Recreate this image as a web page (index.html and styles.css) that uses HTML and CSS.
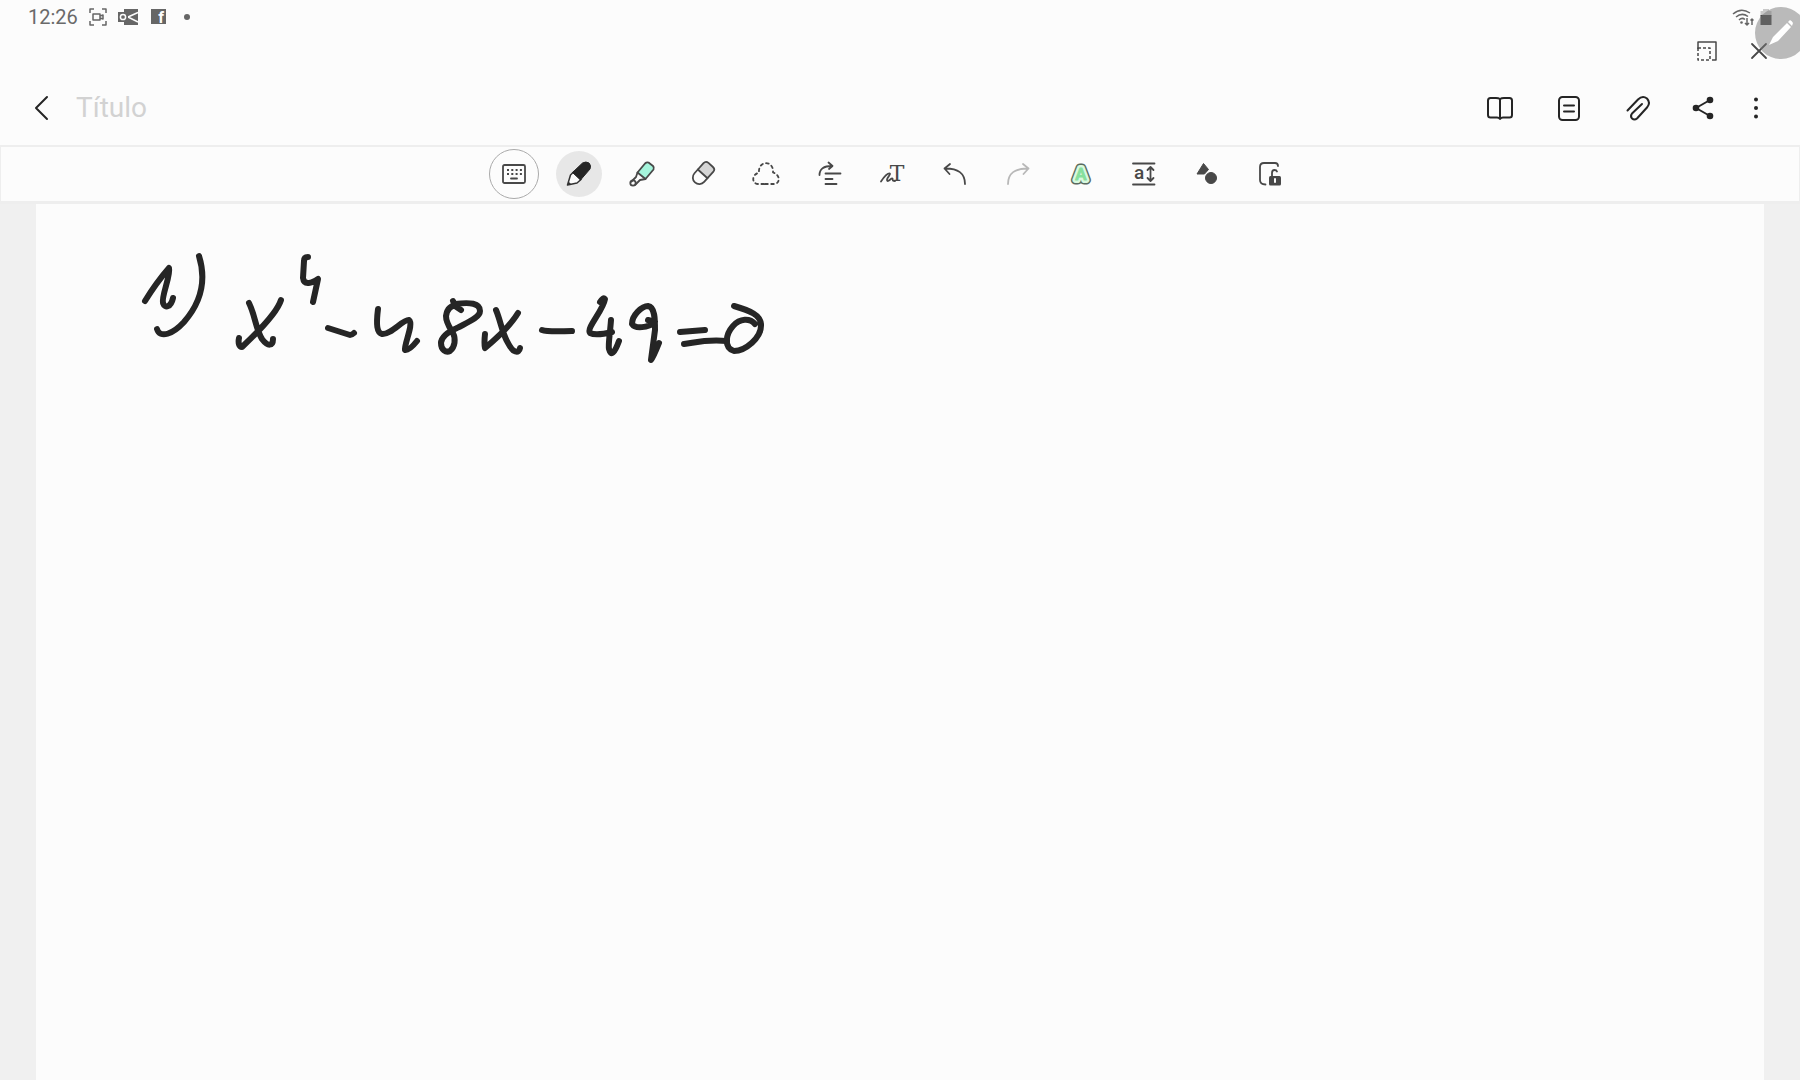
FILE: index.html
```html
<!DOCTYPE html>
<html lang="es">
<head>
<meta charset="utf-8">
<title>Notas</title>
<link rel="stylesheet" href="styles.css">
</head>
<body>
<div class="status">
  <span class="time">12:26</span>
  <svg class="status-icon" viewBox="0 0 20 20"><path class="s2" d="M2 6V2H6M14 2H18V6M18 14V18H14M6 18H2V14"/><path class="s2" d="M5 7H12V13H5ZM12 9L15 8V12L12 11"/></svg>
  <svg class="status-icon" viewBox="0 0 20 20"><path class="solid" d="M6 2H20V18H6Z"/><path d="M10 10L20 5.500M10 10L20 15" stroke="#fcfcfc" stroke-width="1.500"/><path class="solid" d="M0 5H10V15H0Z"/><circle cx="5" cy="10" r="2.600" fill="none" stroke="#fcfcfc" stroke-width="1.500"/></svg>
  <svg class="status-icon" viewBox="0 0 20 20"><path class="solid" d="M3 2H18V17H3Z"/><text x="13" y="16" class="face">f</text></svg>
  <span class="dot"></span>
  <span class="spacer"></span>
  <svg class="wifi" viewBox="0 0 22 20"><g class="s2"><path d="M1 7Q9 0 18 6M4 10Q10 5 16 9.500M7 13Q10 10 13 12.500"/><path d="M15 11V18M13 16L15 18L17 16M20 18V12M18.500 13.500L20 12L21.500 13.500"/></g><circle class="solid" cx="9.500" cy="15.500" r="1.300"/></svg>
  <svg class="battery" viewBox="0 0 12 18"><path fill="#c9c9c9" d="M3 1H9V3H11.500V8H.500V3H3Z"/><path fill="#484848" d="M.500 7H11.500V17H.500Z"/></svg>
</div>
<div class="window-row">
  <button class="win" aria-label="Cambiar tamaño"><svg viewBox="0 0 30 30"><path class="s2" d="M6 13V6H24V24H20"/><path class="s2" stroke-dasharray="3 2" d="M6 12H18V24H6Z"/></svg></button>
  <button class="win" aria-label="Cerrar"><svg viewBox="0 0 30 30"><path class="line" d="M8 8L22 22M22 8L8 22"/></svg></button>
</div>
<header class="header">
  <button class="back" aria-label="Atrás"><svg viewBox="0 0 30 30"><path class="ink" d="M21 4L10 15L21 26"/></svg></button>
  <input class="title" type="text" aria-label="Título" placeholder="Título">
  <div class="actions">
    <button class="act" aria-label="Modo lectura"><svg viewBox="0 0 30 30"><path class="ink" d="M15 6Q13.500 5 11 5H5.500Q3 5 3 7.500V22Q3 24.500 5.500 24.500H12Q14 24.500 15 26Q16 24.500 18 24.500H24.500Q27 24.500 27 22V7.500Q27 5 24.500 5H19Q16.500 5 15 6ZM15 6V25"/></svg></button>
    <button class="act" aria-label="Páginas"><svg viewBox="0 0 30 30"><rect class="ink" x="5" y="4" width="20" height="23" rx="3.500"/><path class="ink" d="M10 12.500H20M10 18.500H20"/></svg></button>
    <button class="act" aria-label="Adjuntar"><svg viewBox="0 0 30 30"><path class="ink" d="M4.500 17.500L15 6.500Q19.500 2 24 5.500Q28 10 24 14.500L14 25.500Q11.500 27.500 9 25.500Q7 23 9 20.500L19 11"/></svg></button>
    <button class="act share" aria-label="Compartir"><svg viewBox="0 0 30 30"><path class="ink" d="M22 7L8 15L22 23"/><g fill="#252525"><circle cx="22" cy="7" r="3.300"/><circle cx="8" cy="15" r="3.300"/><circle cx="22" cy="23" r="3.300"/></g></svg></button>
    <button class="act more" aria-label="Más opciones"><svg viewBox="0 0 30 30" fill="#252525"><circle cx="15" cy="6.500" r="2"/><circle cx="15" cy="15" r="2"/><circle cx="15" cy="23.500" r="2"/></svg></button>
  </div>
</header>
<nav class="toolbar" aria-label="Herramientas">
  <div class="tools">
    <button class="tool keyboard" aria-label="Teclado"><svg viewBox="0 0 30 30"><rect class="line" x="4" y="6" width="22" height="18" rx="1.500"/><path class="line" stroke-dasharray="2 2.300" style="stroke-linecap:butt" d="M8 11H23M8 15H23"/><path class="line" d="M12 19.500H18"/></svg></button>
    <button class="tool active" aria-label="Bolígrafo"><svg viewBox="0 0 30 30"><path d="M3.500 26L6.500 16L10 12.500L17 20.500L13 24Z" fill="#fcfcfc" stroke="#333" stroke-width="1.500" stroke-linejoin="round"/><path d="M3.500 26L4.500 22.500L7 25Z" fill="#333"/><path d="M8.500 13.500L18.500 4Q22 2 25 4Q27.500 6.500 26 10L16.500 21Z" fill="#252525" stroke="#252525" stroke-linejoin="round"/></svg></button>
    <button class="tool" aria-label="Resaltador"><svg viewBox="0 0 30 30"><path class="line mint" d="M10.500 13.500L18 4.500Q19.500 3 21.500 3.500L26 7Q27.500 8.500 26.500 10.500L18.500 20Z"/><path class="line" d="M10.500 13.500L9 18L4.500 22.500M18.500 20L13 21L8.500 25.500"/><circle class="line" cx="6" cy="24" r="2.700"/></svg></button>
    <button class="tool" aria-label="Borrador"><svg viewBox="0 0 30 30"><g transform="rotate(42 14 14.500)"><path class="line eraser-top" d="M7.500 15V6.500Q7.500 3 11 3H17Q20.500 3 20.500 6.500V15Z"/><path class="line" d="M7.500 15V20A6.500 6.500 0 0 0 20.500 20V15"/></g></svg></button>
    <button class="tool" aria-label="Selección"><svg viewBox="0 0 30 30"><path class="line" stroke-dasharray="2.600 3.400" d="M12 25H6C0 25 -1 16 7 13.500C6 1 22 1 21 13.500C29 16 28 25 22 25H12"/></svg></button>
    <button class="tool" aria-label="Alinear"><svg viewBox="0 0 30 30"><path class="line" d="M4.500 16Q4.500 7 17 7M13.500 3.500L17.500 7L14 10M10.500 14.500H25.500M10.500 20H17.500M10.500 25H21.500"/></svg></button>
    <button class="tool" aria-label="Escritura a texto"><svg viewBox="0 0 30 30"><path class="line" d="M3 22.500C6 18 10 14 12 14.500C13 16 7 20 9.500 22C11 22.500 13 19 14.500 19.500C15 21 14 22 17 22"/><text class="tee" x="19" y="22">T</text></svg></button>
    <button class="tool" aria-label="Deshacer"><svg viewBox="0 0 30 30"><path class="line" d="M9 5L3.500 9.500L8.500 15M3.500 9.500Q24 9 24 25"/></svg></button>
    <button class="tool" aria-label="Rehacer" disabled><svg viewBox="0 0 30 30"><path class="line faded" d="M19 5L24.500 9.500L19.500 15M24.500 9.500Q4 9 4 25"/></svg></button>
    <button class="tool" aria-label="Estilo automático"><svg viewBox="0 0 30 30"><g class="auto"><text class="auto-edge" x="15" y="21">A</text><text class="auto-gap" x="15" y="21">A</text><text class="auto-face" x="15" y="21">A</text></g></svg></button>
    <button class="tool" aria-label="Enderezar"><svg viewBox="0 0 30 30"><path class="line" d="M4 4.500H25.500M4 25.500H25.500M21.500 9V21M18.500 11L21.500 8L24.500 11M18.500 19L21.500 22L24.500 19"/><text class="small-a" x="10" y="20">a</text></svg></button>
    <button class="tool" aria-label="Formas"><svg viewBox="0 0 30 30" fill="#484848" stroke="#484848" stroke-linejoin="round"><path d="M11.500 4.500L5 15H12.500L16.500 10.500Z"/><circle cx="19" cy="19" r="5.500"/></svg></button>
    <button class="tool" aria-label="Bloquear"><svg viewBox="0 0 30 30"><path class="line" d="M23 7Q23 4 20 4H9Q5 4 5 8V21Q5 25.500 10.500 25.500M17 17V14Q17 11 19.500 11Q21.500 11 22 12.500"/><rect x="14" y="17" width="12" height="9.500" rx="1.500" fill="#484848"/><path d="M20 20V23" stroke="#fcfcfc" stroke-width="2" stroke-linecap="round"/></svg></button>
  </div>
</nav>
<main class="canvas">
  <div class="page">
    <svg class="handwriting" viewBox="100 230 700 150" role="img" aria-label="1) x⁴ − 48x − 49 = 0">
      <path d="M145 301Q156 283 169 268C171 275 161 297 163 303C165 309 171 307 173 298"/>
      <path d="M199 256C208 285 198 306 184 322C173 334 160 339 157 329"/>
      <path d="M249 303C255 315 256 330 262 339C268 347 273 346 273 339M281 300C277 313 258 332 242 347C239 347 238 343 239 338"/>
      <path d="M308 257Q304 257 304 261L303 278C304 286 312 283 318 279L313 302"/>
      <path d="M328 328L350 335Q352 335 354 333"/>
      <path d="M378 309C376 325 377 333 382 334C391 335 403 319 409 320C414 324 404 344 405 350Q409 351 417 341"/>
      <path d="M453 301L455 306L461 310M455 304C470 302 480 303 480 311C480 318 466 323 457 328C447 332 441 338 441 343C441 350 446 353 450 351C455 347 456 339 453 333C450 328 446 323 446 316C447 309 451 305 458 305"/>
      <path d="M496 310C501 322 502 333 508 343C513 353 519 354 520 348M518 313Q509 328 485 348Q484 343 485 334"/>
      <path d="M542 330Q547 332 572 331"/>
      <path d="M600 302Q603 297 605 299C603 311 586 328 590 333Q596 336 612 332M611 320C610 334 608 345 609 349Q612 360 619 341"/>
      <path d="M648 320L655 322C648 328 635 329 632 324C632 315 642 306 648 306C655 307 655 319 655 330L651 360Q653 358 659 343"/>
      <path d="M680 332L705 330M684 344C694 343 704 339 727 341"/>
      <path d="M734 306C751 311 760 315 761 324C762 338 745 351 734 351C724 348 725 335 733 326C740 318 750 318 755 324"/>
    </svg>
  </div>
</main>
<button class="air" aria-label="Comandos del S Pen"><svg viewBox="0 0 52 52"><path fill="#fff" d="M14 38L18 30L32 16L36 20L23 34ZM33 15L35 13Q37 14 38 16L37 19Z"/></svg></button>
</body>
</html>
```
FILE: styles.css
```css
* {
  box-sizing: border-box;
}

body {
  margin: 0;
  min-height: 100vh;
  display: flex;
  flex-direction: column;
  position: relative;
  overflow-x: hidden;
  background: #fcfcfc;
  color: #252525;
  font-family: Roboto, "Liberation Sans", sans-serif;
}

button {
  padding: 0;
  border: 0;
  background: none;
  display: flex;
  align-items: center;
  justify-content: center;
  flex: none;
}

button svg {
  flex: none;
  width: 30px;
  height: 30px;
}

.line,
.ink,
.s2 {
  fill: none;
  stroke: #484848;
  stroke-width: 1.8;
  stroke-linecap: round;
  stroke-linejoin: round;
}

.ink {
  stroke: #252525;
  stroke-width: 2;
}

.s2 {
  stroke: #666;
  stroke-width: 1.5;
  stroke-linecap: butt;
}

.win .s2 {
  stroke: #484848;
}

.solid {
  fill: #666;
}

.status {
  height: 34px;
  padding: 0 28px;
  display: flex;
  align-items: center;
  gap: 10px;
}

.time {
  font-size: 20px;
  line-height: 34px;
  color: #6a6a6a;
}

.status-icon {
  width: 20px;
  height: 20px;
  overflow: visible;
}

.face {
  font: bold 16px Roboto, sans-serif;
  fill: #fcfcfc;
  text-anchor: middle;
}

.dot {
  width: 6px;
  height: 6px;
  margin-left: 6px;
  border-radius: 50%;
  background: #666;
}

.spacer {
  flex: 1;
}

.wifi {
  width: 22px;
  height: 20px;
}

.battery {
  width: 12px;
  height: 18px;
  margin-left: -4px;
}

.window-row {
  height: 34px;
  padding-right: 26px;
  display: flex;
  align-items: center;
  justify-content: flex-end;
  gap: 22px;
}

.header {
  height: 77px;
  padding: 2px 36px 0 26px;
  display: flex;
  align-items: center;
}

.title {
  flex: 1;
  min-width: 0;
  height: 40px;
  margin-left: 20px;
  padding: 0;
  border: 0;
  outline: 0;
  background: none;
  font: 28px Roboto, sans-serif;
  color: #252525;
}

.title::placeholder {
  color: #d2d2d2;
  opacity: 1;
}

.actions {
  display: flex;
  gap: 29px;
}

.act {
  width: 40px;
  height: 40px;
}

.share {
  width: 32px;
}

.more {
  width: 16px;
}

.toolbar {
  height: 59px;
  padding: 0 18px 1px 0;
  display: flex;
  align-items: center;
  justify-content: center;
  border: 2px solid #eee;
  border-width: 2px 1px 3px;
}

.tools {
  flex: 0 1 804px;
  display: flex;
  align-items: center;
  justify-content: space-between;
}

.tool {
  width: 46px;
  height: 46px;
  border-radius: 50%;
}

.keyboard {
  width: 50px;
  height: 50px;
  border: 1px solid #aaa;
}

.active {
  background: #e7e7e7;
}

.mint {
  fill: #a5f5dc;
}

.eraser-top {
  fill: #d5d5d5;
}

.faded {
  stroke: #b8b8b8;
}

.tee {
  font: 22px "DejaVu Serif", serif;
  fill: #484848;
  text-anchor: middle;
}

.small-a {
  font: 500 19px Roboto, sans-serif;
  fill: #484848;
  text-anchor: middle;
}

.auto {
  font: 500 17px Roboto, sans-serif;
  text-anchor: middle;
  stroke-linejoin: round;
}

.auto-edge {
  stroke: #5a6a60;
  stroke-width: 9;
}

.auto-gap {
  fill: #d8f8df;
  stroke: #d8f8df;
  stroke-width: 6;
}

.auto-face {
  fill: #86e09d;
  stroke: #86e09d;
  stroke-width: 1;
}

.canvas {
  flex: 1;
  padding: 0 36px;
  display: flex;
  background: #f0f0f0;
}

.page {
  flex: 1;
  padding: 26px 64px;
  background: #fcfcfc;
}

.handwriting {
  display: block;
  width: 700px;
  height: 150px;
  fill: none;
  stroke: #252525;
  stroke-width: 6;
  stroke-linecap: round;
  stroke-linejoin: round;
}

/* Floating pen shortcut, partly tucked behind the screen edge */
.air {
  position: absolute;
  top: 7px;
  right: -7px;
  width: 52px;
  height: 52px;
  border-radius: 50%;
  background: rgba(120, 120, 120, 0.5);
}

.air svg {
  width: 52px;
  height: 52px;
}
```
